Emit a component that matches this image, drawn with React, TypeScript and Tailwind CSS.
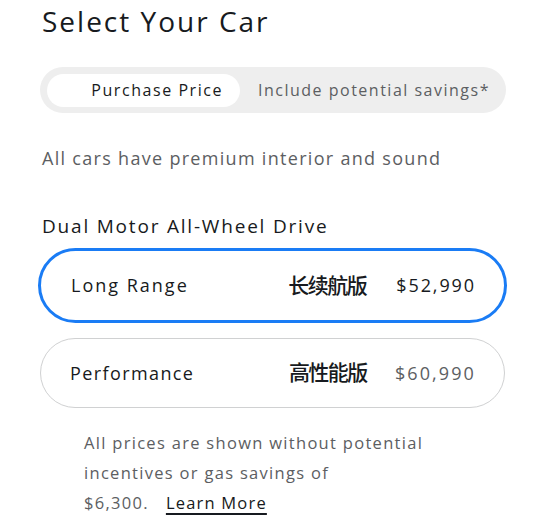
import React from "react";

export default function App() {
  const font = { fontFamily: '"Open Sans", "Noto Sans CJK SC", sans-serif' };
  return (
    <div className="w-[544px] h-[523px] bg-white overflow-hidden text-[#171a20]" style={font}>
      <div className="pl-[42px] pr-[38px]">
        <h1 className="text-[28px] leading-[34px] pt-[4px] font-normal tracking-[2px]">Select Your Car</h1>
        <div className="mt-[29px] -ml-[2px] w-[466px] h-[46px] rounded-full bg-[#eeeeee] flex items-center p-[7px]">
          <div className="w-[193px] h-[33px] rounded-full bg-white flex items-center justify-end pr-[17px] text-[16px] font-medium tracking-[1.55px]">
            Purchase Price
          </div>
          <div className="ml-[18px] text-[16px] font-medium tracking-[1.5px] text-[#5c5e62]">Include potential savings*</div>
        </div>
        <p className="mt-[32px] text-[18px] leading-[26px] tracking-[1.3px] text-[#5c5e62]">All cars have premium interior and sound</p>
        <h2 className="mt-[42px] text-[19px] leading-[26px] font-medium tracking-[1.8px]">Dual Motor All-Wheel Drive</h2>
        <div className="mt-[9px] -ml-[4px] w-[469px] h-[75px] rounded-full border-[3px] border-[#1a7cf5] flex items-center pl-[30px] pr-[28px] text-[18px]">
          <span className="font-medium tracking-[2px]">Long Range</span>
          <span className="ml-auto text-[21px] font-medium tracking-[-1.5px]">长续航版</span>
          <span className="ml-[30px] font-medium tracking-[1.9px]">$52,990</span>
        </div>
        <div className="mt-[15px] -ml-[2px] w-[465px] h-[70px] rounded-full border-[1.5px] border-[#d0d1d2] flex items-center pl-[29px] pr-[28px] text-[18px]">
          <span className="tracking-[1.4px]">Performance</span>
          <span className="ml-auto text-[21px] font-medium tracking-[-1.5px]">高性能版</span>
          <span className="ml-[28px] tracking-[2.1px] text-[#5c5e62]">$60,990</span>
        </div>
        <div className="mt-[20px] pl-[42px] pr-[20px] text-[16.5px] leading-[30px] tracking-[1.3px] text-[#5c5e62]">
          All prices are shown without potential
          <br />
          incentives or gas savings of
          <br />
          $6,300.
          <span className="ml-[17px] text-[#171a20] tracking-[1.2px] underline underline-offset-[4px] decoration-[1.5px]">Learn More</span>
        </div>
      </div>
    </div>
  );
}
